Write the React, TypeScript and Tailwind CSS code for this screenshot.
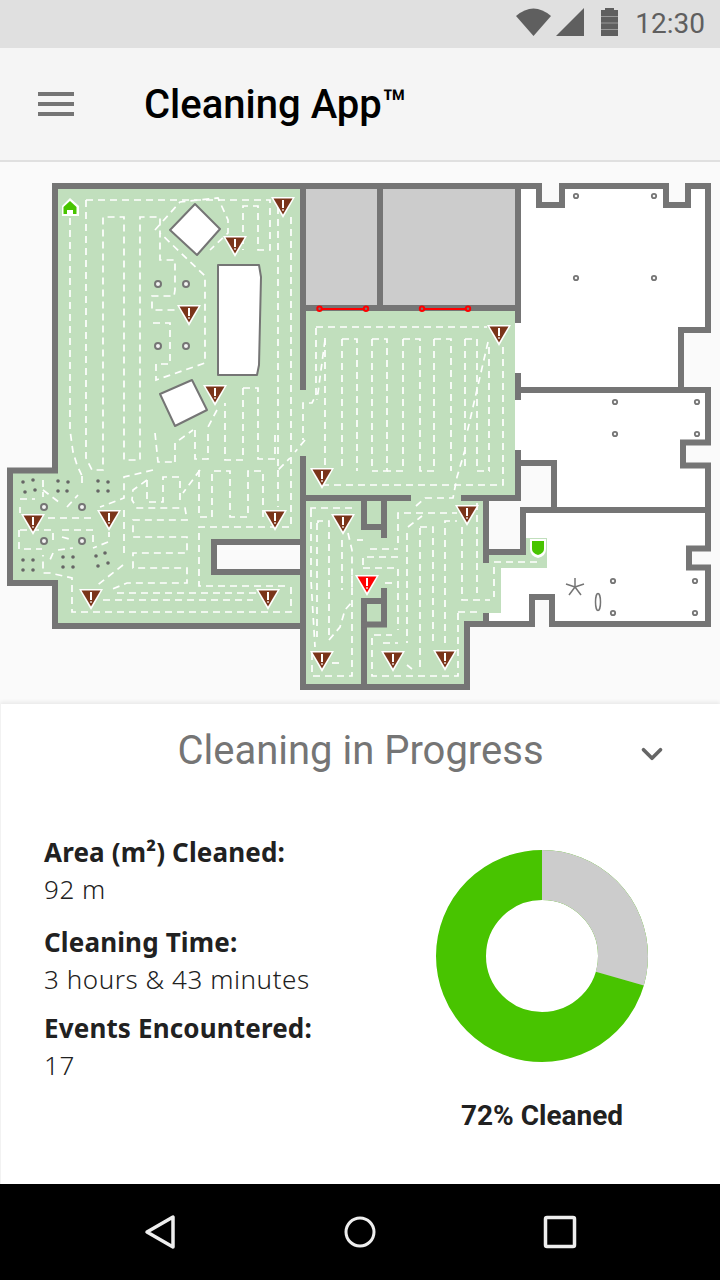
import { ChevronDown } from 'lucide-react'

const WALL = '#757575'

const walls = [
  'M55 473 V186 H539 V205 H562 V186 H666 V205 H688 V186 H708 V330 H681 V393',
  'M515 390 H708 V442.5 H683 V465.5 H708 V510 H523 V552 H483',
  'M708 507 V548.5 H689 V567.5 H708 V624 H552 V597 H532 V624 H467 V687 H303',
  'M303 183 V390',
  'M303 456 V690',
  'M300 308 H521',
  'M380 186 V305',
  'M518 183 V323',
  'M518 373 V400',
  'M518 450 V501',
  'M300 498 H411',
  'M461 498 H521',
  'M554 460 V510',
  'M521 463 H557',
  'M486 498 V563',
  'M486 613 V627',
  'M364 498 V527 H387',
  'M384 498 V538',
  'M364 690 V601 H387',
  'M384 588 V624.5 H361',
  'M303 542 H214 V572 H303',
  'M58 470.5 H10 V583 H55 V626 H306',
]

const paths = [
  // left room, long passes
  'M70 218 V430 L73 452 L77 465 L82 476',
  'M86 200 V458 L92 470 H103 V217 H124 V460 H140 V217 H160 V260 H175 V290 L174 296 H152 V310 H176',
  'M86 200 H270 V250 H258 V206 H243 V250',
  'M153 323 H170 V364 H156 V380 L205 363 V276 L160 233',
  'M155 230 L180 202 L218 198 L228 220 V233 L210 250',
  'M278 207 V470 L290 458',
  'M291 217 V527 H199 V586 H285 M291 587 V612 H72 V578 L50 573 H43 V555',
  'M305 440 L295 452',
  'M243 388 H258 V459 H275 V430',
  'M243 388 V460 H225 V403',
  'M195 430 V459 H208 V430',
  'M217 410 L208 427',
  'M175 462 V443 L193 430',
  'M155 433 L158 462 H175',
  'M153 470 L124 477 V498 L100 507',
  'M147 480 L133 490 L132 500 L137 508 H185 L187 520 H133 V537 H187 V553 H133 V568 H187 V583 H127 L110 590',
  'M147 480 V502 H163 V477 H180 V500',
  'M200 470 L183 493',
  'M199 470 V517 H212 V471 H230 V517 H248 V471 H263 V517',
  'M278 470 V507',
  'M117 593 H260',
  'M103 600 H253',
  'M123 565 L95 587',
  'M124 510 V557',
  'M108 542 L93 548',
  'M109 532 V537',
  'M20 499 H35',
  'M20 507 V513',
  'M19 530 V549 H42',
  'M43 480 V497',
  'M43 490 L60 503',
  'M67 507 L78 495',
  'M82 476 V485',
  'M48 518 H92',
  'M20 530 H53 V540',
  'M62 530 H93 V543',
  'M62 537 L73 540',
  'M58 550 L73 548',
  'M53 553 L50 560',
  // middle room
  'M316 328 V395 L312 403 H303 V440',
  'M316 327 H487',
  'M325 340 L317 400',
  'M325 338 V470',
  'M342 339 H357 V471',
  'M342 339 V470',
  'M372 339 H387 V471 H372',
  'M372 339 V471 M403 339 V471 H387 M403 339 H420 V471 H435 M434 339 H451 V471',
  'M434 339 V471',
  'M465 339 H477 V471 H490',
  'M465 339 V471',
  'M489 347 V471',
  'M503 347 V485 H323',
  'M488 342 L467 433',
  // lower rooms
  'M311 510 V508 H352',
  'M311 510 V580 L315 647 M312 653 V676 H352 V570',
  'M318 523 V521 H329 V637',
  'M317 523 V637',
  'M329 640 L340 627 L345 610 L352 602',
  'M342 540 V590',
  'M348 533 L352 550 V590',
  'M357 540 H363',
  'M332 663 H340',
  'M370 549 H398',
  'M363 565 V557 H398',
  'M363 568 H398 V630',
  'M398 543 V513 H457',
  'M408 527 L422 516',
  'M416 506 L425 498 H453 L457 477 L465 450',
  'M407 533 V643',
  'M420 528 V667',
  'M420 527 H433 V643',
  'M445 643 V521 H457',
  'M462 527 V600 H490',
  'M477 503 V593',
  'M458 612 H477',
  'M458 613 V676 H372 V635 H392',
  'M383 643 H398',
  'M407 665 L412 669',
  'M385 583 H397',
  'M537 562 H494 V597',
]

const pillars = [
  [158, 284], [186, 284], [158, 346], [186, 346],
  [44, 507], [82, 507], [44, 541], [82, 541],
]

const smallPillars = [
  [576, 196], [654, 196], [576, 278], [654, 278],
  [615, 402], [697, 402], [615, 434], [697, 434],
  [613, 581], [695, 581], [613, 613], [695, 613],
]

const dots = [
  [23, 482], [33, 480], [25, 492], [35, 490],
  [58, 481], [68, 482], [58, 491], [67, 491],
  [98, 481], [108, 482], [98, 491], [108, 491],
  [23, 560], [33, 560], [23, 570], [33, 570],
  [63, 557], [73, 557], [63, 567], [73, 567],
  [96, 556], [105, 553], [98, 566], [108, 563],
]

const warnings = [
  [283, 197], [235, 236], [189, 305], [215, 385], [499, 325],
  [322, 468], [33, 514], [109, 510], [275, 510], [91, 589],
  [268, 589], [343, 514], [322, 651], [467, 505], [393, 651], [445, 650],
]

function Warning({ x, y, color }: { x: number; y: number; color: string }) {
  return (
    <g transform={`translate(${x} ${y})`}>
      <polygon points="-12,0 12,0 0,21" fill="#fff" />
      <polygon points="-9.5,1.5 9.5,1.5 0,17.5" fill={color} />
      <rect x="-1" y="3" width="2" height="8" fill="#fff" />
      <circle cx="0" cy="13" r="1" fill="#e6d5cf" />
    </g>
  )
}

function FloorMap() {
  return (
    <svg viewBox="0 162 720 542" className="block h-[542px] w-[720px]">
      <path d="M58 189 H303 V626 H55 V583 H10 V470 H58 Z" fill="#c1dfbd" />
      <path d="M300 311 H515 V498 H300 Z" fill="#c1dfbd" />
      <path
        d="M303 498 H486 V555 H526 V538 H547 V568 H501 V613 H483 V624 H467 V687 H303 Z"
        fill="#c1dfbd"
      />
      <rect x="217" y="545" width="83" height="24" fill="#fafafa" />
      <rect x="306" y="189" width="209" height="116" fill="#cccccc" />
      <path
        d="M521 189 H536 V208 H565 V189 H663 V208 H691 V189 H705 V327 H678 V387 H515 V323 H521 Z"
        fill="#fff"
      />
      <path
        d="M515 393 H705 V440 H680 V468 H705 V507 H557 V460 H521 V450 H515 Z"
        fill="#fff"
      />
      <path
        d="M526 513 H705 V546 H686 V570 H705 V621 H555 V594 H529 V621 H489 V613 H501 V568 H547 V538 H526 Z"
        fill="#fff"
      />

      <g fill="none" stroke="#fff" strokeWidth="1.7" strokeDasharray="7 5">
        {paths.map((d) => (
          <path key={d} d={d} />
        ))}
      </g>

      <g fill="none" stroke={WALL} strokeWidth="6">
        {walls.map((d) => (
          <path key={d} d={d} />
        ))}
      </g>

      <g fill="#fff" stroke={WALL} strokeWidth="2" strokeLinejoin="round">
        <polygon points="170,230 195,204 220,229 197,255" />
        <polygon points="218,265 259,265 261,277 259,365 257,375 218,375" />
        <polygon points="160,394 192,380 207,410 175,426" />
      </g>

      {pillars.map(([x, y]) => (
        <circle key={`${x}-${y}`} cx={x} cy={y} r="3" fill="#f4f4f4" stroke={WALL} strokeWidth="2" />
      ))}
      {smallPillars.map(([x, y]) => (
        <circle key={`${x}-${y}`} cx={x} cy={y} r="2.2" fill="#f4f4f4" stroke={WALL} strokeWidth="1.8" />
      ))}
      {dots.map(([x, y]) => (
        <circle key={`${x}-${y}`} cx={x} cy={y} r="1.8" fill="#666666" />
      ))}

      <g fill="none" stroke="#ff0000" strokeWidth="2">
        <path d="M322 309 H366 M422 309 H468" />
        <circle cx="319.5" cy="308.7" r="2.2" fill={WALL} />
        <circle cx="366" cy="308.7" r="2.2" fill={WALL} />
        <circle cx="422" cy="308.7" r="2.2" fill={WALL} />
        <circle cx="468" cy="308.7" r="2.2" fill={WALL} />
      </g>

      <g stroke={WALL} strokeWidth="1.5" fill="none">
        <path d="M575 578 V587 M575 587 L566 584 M575 587 L584 584 M575 587 L569 595 M575 587 L581 595" />
        <ellipse cx="598" cy="602" rx="2.5" ry="8.5" fill="#fff" />
      </g>

      {/* home marker */}
      <path d="M70 198 L79 206 V216 H62 V206 Z" fill="#fff" />
      <path d="M70 201 L76.5 207 V214 H73 V210 H67 V214 H63.5 V207 Z" fill="#48c400" />

      {/* robot marker */}
      <path d="M530 539 H546 V549 Q546 556 538 558 Q530 556 530 549 Z" fill="#fff" />
      <path d="M532 541 H544 V549 Q544 553 538 555 Q532 553 532 549 Z" fill="#48c400" />

      {warnings.map(([x, y]) => (
        <Warning key={`${x}-${y}`} x={x} y={y} color="#7a3419" />
      ))}
      <Warning x={367} y={575} color="#ff0000" />
    </svg>
  )
}

function Stat({ label, value, className }: { label: string; value: string; className: string }) {
  return (
    <div className={className}>
      <div className="text-[26px] leading-[38px] font-bold tracking-[0.15px] text-[#212121]">
        {label}
      </div>
      <div className="-mt-px text-[26px] leading-[38px] font-light tracking-[0.55px] text-[#212121]">
        {value}
      </div>
    </div>
  )
}

export default function App() {
  return (
    <div className="flex h-[1280px] w-[720px] flex-col overflow-hidden bg-white font-['Roboto',sans-serif]">
      {/* status bar */}
      <div className="flex h-12 items-center justify-end gap-[5px] bg-[#e0e0e0] pr-[15px]">
        <svg width="120" height="48" viewBox="510 0 120 48" className="mr-[-1px]">
          <path d="M515 16 Q532.5 1 550 16 L532.5 36 Z" fill="#5f5f5f" />
          <path d="M555 36 L583 8 V36 Z" fill="#5f5f5f" />
          <rect x="600" y="10" width="17" height="26" fill="#5f5f5f" />
          <rect x="604" y="8" width="9" height="3" fill="#5f5f5f" />
          <path d="M600 16.5 H617 M600 23 H617 M600 29.5 H617" stroke="#999999" strokeWidth="1" />
        </svg>
        <span className="text-[28px] leading-none text-[#5f5f5f]">12:30</span>
      </div>

      {/* toolbar */}
      <div className="flex h-[114px] items-center border-b-2 border-[#e0e0e0] bg-[#f5f5f5] pl-[38px]">
        <div className="flex w-[36px] flex-col gap-[6px]">
          <div className="h-1 bg-[#757575]" />
          <div className="h-1 bg-[#757575]" />
          <div className="h-1 bg-[#757575]" />
        </div>
        <h1 className="ml-[70px] pt-[2px] text-[40px] leading-none font-medium text-black">
          Cleaning App™
        </h1>
      </div>

      <div className="h-[542px] bg-[#fafafa]">
        <FloorMap />
      </div>

      {/* progress card */}
      <div className="relative flex h-[480px] flex-col border-l border-[#f2f2f2] bg-white shadow-[0_-2px_4px_rgba(0,0,0,0.07)]">
        <div className="relative flex h-[92px] items-center justify-center pt-[2px]">
          <span className="text-[40px] leading-none text-[#757575]">Cleaning in Progress</span>
          <ChevronDown
            size={34}
            strokeWidth={2.6}
            className="absolute top-[33px] right-[51px] text-[#666666]"
          />
        </div>
        <div className="flex flex-1">
          <div className="w-[434px] pt-[37px] pl-[43px] font-['Noto_Sans',sans-serif]">
            <Stat label="Area (m²) Cleaned:" value="92 m" className="" />
            <Stat label="Cleaning Time:" value="3 hours & 43 minutes" className="mt-[15px]" />
            <Stat label="Events Encountered:" value="17" className="mt-[11px]" />
          </div>
          <div className="flex w-[214px] flex-col items-center pt-[54px]">
            <svg width="212" height="212" viewBox="0 0 212 212" className="-rotate-90">
              <circle cx="106" cy="106" r="81" fill="none" stroke="#48c400" strokeWidth="50" />
              <circle
                cx="106"
                cy="106"
                r="81"
                fill="none"
                stroke="#cccccc"
                strokeWidth="50"
                strokeDasharray="150 358.9"
              />
            </svg>
            <div className="mt-[40px] text-[28px] leading-none font-bold text-[#212121]">
              72% Cleaned
            </div>
          </div>
        </div>
      </div>

      {/* nav bar */}
      <div className="flex h-24 items-center justify-around bg-black px-[60px]">
        <svg width="34" height="36" viewBox="0 0 34 36" fill="none" stroke="#eeeeee" strokeWidth="3.5" strokeLinejoin="round">
          <path d="M30 3 V33 L4 18 Z" />
        </svg>
        <svg width="34" height="36" viewBox="0 0 34 36" fill="none" stroke="#eeeeee" strokeWidth="3">
          <circle cx="17" cy="18" r="14" />
        </svg>
        <svg width="34" height="36" viewBox="0 0 34 36" fill="none" stroke="#eeeeee" strokeWidth="3.5" strokeLinejoin="round">
          <rect x="2.5" y="3.5" width="29" height="29" rx="1.5" />
        </svg>
      </div>
    </div>
  )
}
